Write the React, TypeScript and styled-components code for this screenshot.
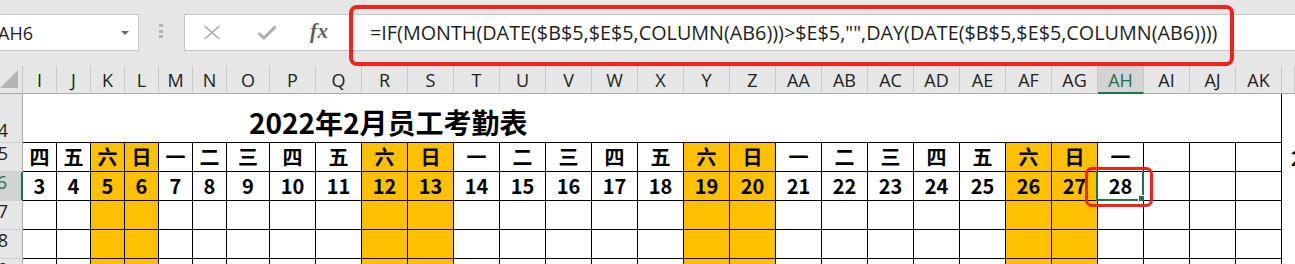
import React from "react";
import styled, { createGlobalStyle } from "styled-components";

const Global = createGlobalStyle`
  html, body { margin: 0; padding: 0; background: #e6e6e6; }
  #root { width: 1295px; height: 264px; overflow: hidden; }
`;

const UI_FONT = `"Open Sans", "Noto Sans", "DejaVu Sans", sans-serif`;
const CJK_FONT = `"Noto Sans CJK SC", "Noto Sans", sans-serif`;
const GREEN = "#217346";
const RED = "#f5221a";
const GOLD = "#ffc000";

const Page = styled.div`
  position: relative;
  width: 1295px;
  height: 264px;
  overflow: hidden;
  background: #e6e6e6;
  font-family: ${UI_FONT};
`;

const Toolbar = styled.div`
  height: 66px;
  box-sizing: border-box;
  padding-top: 14px;
  display: flex;
  align-items: flex-start;
`;

const NameBox = styled.div`
  box-sizing: border-box;
  margin-left: -10px;
  width: 149px;
  height: 37px;
  background: #fff;
  border: 1px solid #c6c6c6;
  display: flex;
  align-items: center;
  padding-left: 7px;
  font-size: 18px;
  color: #222;
`;

const Caret = styled.span`
  margin-left: auto;
  margin-right: 9px;
  width: 0;
  height: 0;
  border-left: 4px solid transparent;
  border-right: 4px solid transparent;
  border-top: 4px solid #6b6b6b;
`;

const Grip = styled.div`
  margin-left: 20px;
  margin-top: 10px;
  display: flex;
  flex-direction: column;
  gap: 2.5px;
  width: 4px;
`;

const GripDot = styled.span`
  display: block;
  width: 4px;
  height: 3px;
  background: #b3b3b3;
`;

const ButtonBox = styled.div`
  box-sizing: border-box;
  margin-left: 21px;
  width: 166px;
  height: 37px;
  background: #fff;
  border: 1px solid #c6c6c6;
  border-right: none;
  display: flex;
  align-items: center;
  padding-left: 18px;
`;

const IconSlot = styled.span<{ $w: number }>`
  display: inline-flex;
  width: ${(p) => p.$w}px;
  justify-content: flex-start;
  align-items: center;
`;

const Fx = styled.span`
  font-family: "Liberation Serif", "DejaVu Serif", serif;
  font-style: italic;
  font-weight: bold;
  font-size: 21px;
  color: #5f5f5f;
  letter-spacing: 0.5px;
  margin-top: -2px;
`;

const FormulaInput = styled.div`
  box-sizing: border-box;
  flex: 1;
  height: 37px;
  background: #fff;
  border: 1px solid #c6c6c6;
  margin-right: -20px;
  display: flex;
  align-items: center;
  padding-left: 19px;
  font-size: 19.8px;
  color: #1e1e1e;
  white-space: nowrap;
`;

const Sheet = styled.div`
  display: grid;
  grid-template-columns: 23px repeat(6, 34px) 43px repeat(22, 46px) 1fr;
  grid-template-rows: 28px 49px 29px 29px 29px 29px 29px;
  background: #fff;
`;

const Corner = styled.div`
  box-sizing: border-box;
  background: #e6e6e6;
  border-right: 1px solid #c8c8c8;
  border-bottom: 1px solid #ababab;
  display: flex;
  align-items: flex-start;
  padding-top: 4px;
`;

const ColHeader = styled.div<{ $active?: boolean }>`
  box-sizing: border-box;
  background: ${(p) => (p.$active ? "#d3d3d3" : "#e6e6e6")};
  color: ${(p) => (p.$active ? GREEN : "#222")};
  border-right: 1px solid #c8c8c8;
  border-bottom: ${(p) => (p.$active ? `2px solid ${GREEN}` : "1px solid #ababab")};
  font-size: 18px;
  display: flex;
  align-items: center;
  justify-content: center;
  padding-top: ${(p) => (p.$active ? 1 : 0)}px;
  overflow: hidden;
  white-space: nowrap;
`;

const RowHeader = styled.div<{ $active?: boolean; $pb: number }>`
  box-sizing: border-box;
  background: ${(p) => (p.$active ? "#d3d3d3" : "#e6e6e6")};
  color: ${(p) => (p.$active ? GREEN : "#222")};
  border-right: ${(p) => (p.$active ? `2px solid ${GREEN}` : "1px solid #ababab")};
  border-bottom: 1px solid #d0d0d0;
  font-size: 18px;
  line-height: 18px;
  display: flex;
  align-items: flex-end;
  justify-content: flex-end;
  padding-bottom: ${(p) => p.$pb}px;
  overflow: hidden;
`;

const RowNum = styled.span`
  flex: none;
  width: 38px;
  text-align: center;
`;

const TitleCell = styled.div`
  grid-column: 2 / span 29;
  box-sizing: border-box;
  border-right: 1px solid #000;
  border-bottom: 1px solid #000;
  display: flex;
  align-items: flex-end;
  padding-left: 226px;
  padding-bottom: 6px;
  font-family: ${CJK_FONT};
  font-weight: 700;
  font-size: 28px;
  line-height: 1;
  color: #000;
  white-space: nowrap;
`;

const Cell = styled.div<{ $weekend?: boolean }>`
  position: relative;
  box-sizing: border-box;
  background: ${(p) => (p.$weekend ? GOLD : "#fff")};
  border-right: 1px solid #000;
  border-bottom: 1px solid #000;
  display: flex;
  align-items: center;
  justify-content: center;
  font-family: ${CJK_FONT};
  font-weight: 700;
  font-size: 20px;
  line-height: 1;
  color: #000;
`;

const EdgeCell = styled.div`
  background: #fff;
  overflow: hidden;
  display: flex;
  align-items: center;
  padding-left: 9px;
  font-family: ${CJK_FONT};
  font-weight: 700;
  font-size: 20px;
  color: #000;
`;

const Selection = styled.div`
  position: absolute;
  left: -2px;
  top: -1px;
  right: -1px;
  bottom: -1px;
  border-left: 2px solid ${GREEN};
  border-right: 2px solid ${GREEN};
  border-bottom: 2px solid ${GREEN};
  pointer-events: none;
`;

const FillHandle = styled.span`
  position: absolute;
  right: -4px;
  bottom: -4px;
  width: 6px;
  height: 6px;
  background: ${GREEN};
  border: 1px solid #fff;
`;

const Callout = styled.div<{ $x: number; $y: number; $w: number; $h: number; $b: number; $r: number }>`
  position: absolute;
  left: ${(p) => p.$x}px;
  top: ${(p) => p.$y}px;
  width: ${(p) => p.$w}px;
  height: ${(p) => p.$h}px;
  box-sizing: border-box;
  border: ${(p) => p.$b}px solid ${RED};
  border-radius: ${(p) => p.$r}px;
  pointer-events: none;
`;

type Col = { name: string; wd?: string; d?: string; weekend?: boolean };

const cols: Col[] = [
  { name: "I", wd: "四", d: "3" },
  { name: "J", wd: "五", d: "4" },
  { name: "K", wd: "六", d: "5", weekend: true },
  { name: "L", wd: "日", d: "6", weekend: true },
  { name: "M", wd: "一", d: "7" },
  { name: "N", wd: "二", d: "8" },
  { name: "O", wd: "三", d: "9" },
  { name: "P", wd: "四", d: "10" },
  { name: "Q", wd: "五", d: "11" },
  { name: "R", wd: "六", d: "12", weekend: true },
  { name: "S", wd: "日", d: "13", weekend: true },
  { name: "T", wd: "一", d: "14" },
  { name: "U", wd: "二", d: "15" },
  { name: "V", wd: "三", d: "16" },
  { name: "W", wd: "四", d: "17" },
  { name: "X", wd: "五", d: "18" },
  { name: "Y", wd: "六", d: "19", weekend: true },
  { name: "Z", wd: "日", d: "20", weekend: true },
  { name: "AA", wd: "一", d: "21" },
  { name: "AB", wd: "二", d: "22" },
  { name: "AC", wd: "三", d: "23" },
  { name: "AD", wd: "四", d: "24" },
  { name: "AE", wd: "五", d: "25" },
  { name: "AF", wd: "六", d: "26", weekend: true },
  { name: "AG", wd: "日", d: "27", weekend: true },
  { name: "AH", wd: "一", d: "28" },
  { name: "AI" },
  { name: "AJ" },
  { name: "AK" },
];

const FORMULA = '=IF(MONTH(DATE($B$5,$E$5,COLUMN(AB6)))>$E$5,"",DAY(DATE($B$5,$E$5,COLUMN(AB6))))';

export default function App() {
  return (
    <Page>
      <Global />
      <Toolbar>
        <NameBox>
          AH6
          <Caret />
        </NameBox>
        <Grip>
          <GripDot />
          <GripDot />
          <GripDot />
        </Grip>
        <ButtonBox>
          <IconSlot $w={54}>
            <svg width="18" height="15" viewBox="0 0 18 15">
              <path d="M1.5 1 L16.5 14 M16.5 1 L1.5 14" stroke="#a6a6a6" strokeWidth="1.6" fill="none" />
            </svg>
          </IconSlot>
          <IconSlot $w={53}>
            <svg width="20" height="15" viewBox="0 0 20 15">
              <path d="M1.5 8 L7 13 L18.5 1.5" stroke="#ababab" strokeWidth="3" fill="none" />
            </svg>
          </IconSlot>
          <Fx>fx</Fx>
        </ButtonBox>
        <FormulaInput>{FORMULA}</FormulaInput>
      </Toolbar>

      <Sheet>
        <Corner>
          <svg width="19" height="19" viewBox="0 0 19 19">
            <polygon points="18,0 18,18 0,18" fill="#b5b5b5" />
          </svg>
        </Corner>
        {cols.map((c) => (
          <ColHeader key={c.name} $active={c.name === "AH"}>
            {c.name}
          </ColHeader>
        ))}
        <ColHeader />

        <RowHeader $pb={3}>
          <RowNum>4</RowNum>
        </RowHeader>
        <TitleCell>2022年2月员工考勤表</TitleCell>
        <EdgeCell />

        <RowHeader $pb={9}>
          <RowNum>5</RowNum>
        </RowHeader>
        {cols.map((c) => (
          <Cell key={c.name} $weekend={c.weekend}>
            {c.wd}
          </Cell>
        ))}
        <EdgeCell>2</EdgeCell>

        <RowHeader $pb={9} $active>
          <RowNum>6</RowNum>
        </RowHeader>
        {cols.map((c) => (
          <Cell key={c.name} $weekend={c.weekend}>
            {c.d}
            {c.name === "AH" && (
              <Selection>
                <FillHandle />
              </Selection>
            )}
          </Cell>
        ))}
        <EdgeCell />

        {[7, 8, 9].map((r) => (
          <React.Fragment key={r}>
            <RowHeader $pb={9}>
              <RowNum>{r}</RowNum>
            </RowHeader>
            {cols.map((c) => (
              <Cell key={c.name} $weekend={c.weekend} />
            ))}
            <EdgeCell />
          </React.Fragment>
        ))}
      </Sheet>

      <Callout $x={349} $y={5} $w={885} $h={61} $b={4} $r={8} />
      <Callout $x={1085} $y={167} $w={68} $h={40} $b={3} $r={7} />
    </Page>
  );
}
